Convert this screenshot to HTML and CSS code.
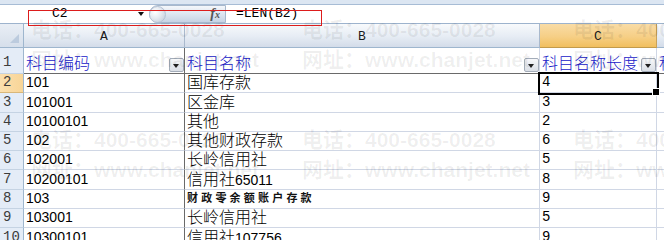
FILE: index.html
```html
<!DOCTYPE html>
<html lang="zh-CN">
<head>
  <meta charset="UTF-8" />
  <title>科目名称长度</title>
  <link rel="stylesheet" href="styles.css">
</head>
<body>
  <div class="app">
    <div class="ribbon-edge"></div>

    <div class="formula-bar">
      <div class="name-box">
        <span class="cell-ref">C2</span>
        <span class="drop-arrow"></span>
      </div>
      <div class="fx-pill">
        <span class="knob"></span>
        <span class="fx">f<small>x</small></span>
      </div>
      <div class="formula">=LEN(B2)</div>
    </div>

    <div class="sheet">
      <div class="corner"><span class="tri"></span></div>
      <div class="col-hd">A</div>
      <div class="col-hd">B</div>
      <div class="col-hd active">C</div>
      <div class="col-hd last"></div>

      <div class="row-hd first">1</div>
      <div class="cell head col-a"><span>科目编码</span><span class="filter"></span></div>
      <div class="cell head"><span>科目名称</span><span class="filter"></span></div>
      <div class="cell head"><span>科目名称长度</span><span class="filter"></span></div>
      <div class="cell head last"><span>科</span></div>

      <div class="row-hd active">2</div>
      <div class="cell col-a">101</div>
      <div class="cell zh">国库存款</div>
      <div class="cell num sel">4</div>
      <div class="cell last"></div>

      <div class="row-hd">3</div>
      <div class="cell col-a">101001</div>
      <div class="cell zh">区金库</div>
      <div class="cell num">3</div>
      <div class="cell last"></div>

      <div class="row-hd">4</div>
      <div class="cell col-a">10100101</div>
      <div class="cell zh">其他</div>
      <div class="cell num">2</div>
      <div class="cell last"></div>

      <div class="row-hd">5</div>
      <div class="cell col-a">102</div>
      <div class="cell zh">其他财政存款</div>
      <div class="cell num">6</div>
      <div class="cell last"></div>

      <div class="row-hd">6</div>
      <div class="cell col-a">102001</div>
      <div class="cell zh">长岭信用社</div>
      <div class="cell num">5</div>
      <div class="cell last"></div>

      <div class="row-hd">7</div>
      <div class="cell col-a">10200101</div>
      <div class="cell zh">信用社<span class="digits">65011</span></div>
      <div class="cell num">8</div>
      <div class="cell last"></div>

      <div class="row-hd">8</div>
      <div class="cell col-a">103</div>
      <div class="cell"><span class="brush">财政零余额账户存款</span></div>
      <div class="cell num">9</div>
      <div class="cell last"></div>

      <div class="row-hd">9</div>
      <div class="cell col-a">103001</div>
      <div class="cell zh">长岭信用社</div>
      <div class="cell num">5</div>
      <div class="cell last"></div>

      <div class="row-hd">10</div>
      <div class="cell col-a">10300101</div>
      <div class="cell zh">信用社<span class="digits">107756</span></div>
      <div class="cell num">9</div>
      <div class="cell last"></div>
    </div>

    <!-- 水印 -->
    <div class="watermark">
      <div class="wm-block">
        <div class="wm-line"><span>电话：400-665-0028</span><span>电话：400-665-0028</span><span>电话：400-665-0028</span></div>
        <div class="wm-line"><span>网址：www.chanjet.net</span><span>网址：www.chanjet.net</span><span>网址：www.chanjet.net</span></div>
      </div>
      <div class="wm-block">
        <div class="wm-line"><span>电话：400-665-0028</span><span>电话：400-665-0028</span><span>电话：400-665-0028</span></div>
        <div class="wm-line"><span>网址：www.chanjet.net</span><span>网址：www.chanjet.net</span><span>网址：www.chanjet.net</span></div>
      </div>
    </div>

    <div class="mark"></div>
  </div>
</body>
</html>
```

FILE: styles.css
```css
:root {
  --grid: #d0d7e5;
  --hd-border: #9eb6ce;
  --dark: #6a6a6a;
  --title: #2020c8;
}
* { box-sizing: border-box; }
body {
  margin: 0;
  background: #fff;
  font-family: 'Liberation Sans', 'Noto Sans CJK SC', sans-serif;
  color: #000;
}
.app {
  position: relative;
  width: 664px;
  height: 240px;
  overflow: hidden;
}
.ribbon-edge {
  height: 5px;
  background: #dce6f2;
  border-bottom: 1px solid #a7bcd5;
}

/* formula bar */
.formula-bar {
  display: flex;
  height: 19px;
  border-bottom: 1px solid #9db3cd;
  background: #fff;
}
.name-box {
  width: 149px;
  display: flex;
  align-items: center;
  padding-left: 52px;
  font: 13px/18px 'Liberation Mono', monospace;
}
.drop-arrow {
  margin-left: auto;
  margin-right: 5px;
  border-top: 4px solid #111;
  border-left: 3.5px solid transparent;
  border-right: 3.5px solid transparent;
}
.fx-pill {
  width: 77px;
  display: flex;
  align-items: center;
  justify-content: space-between;
  border: 1px solid #a8b8cc;
  border-radius: 9px 0 0 9px;
  background: linear-gradient(#f4f7fb, #dbe4ef 55%, #c6d3e4);
}
.knob {
  width: 17px;
  height: 17px;
  margin-left: -1px;
  border-radius: 50%;
  border: 1px solid #b4c2d4;
  background: radial-gradient(circle at 35% 35%, #ffffff, #e4e9f0 45%, #bcc8d8);
}
.fx {
  margin-right: 5px;
  font: italic bold 14px/16px 'Liberation Serif', serif;
  color: #555;
}
.fx small { font-size: 10px; }
.formula {
  padding-left: 10px;
  font: 13px/18px 'Liberation Mono', monospace;
}

/* sheet grid */
.sheet {
  display: grid;
  grid-template-columns: 24px 161px 355px 117px 1fr;
  grid-template-rows: 24px 26px repeat(9, 19.3px);
}
.corner {
  position: relative;
  background: linear-gradient(#e9eef5, #d6dfeb);
  border-right: 1px solid var(--hd-border);
  border-bottom: 1px solid var(--hd-border);
}
.corner .tri {
  position: absolute;
  right: 4px;
  bottom: 4px;
  border-left: 9px solid transparent;
  border-bottom: 9px solid #bccbde;
}
.col-hd {
  display: flex;
  justify-content: center;
  padding-top: 5px;
  font: 13px/16px 'Liberation Mono', monospace;
  color: #1b1b1b;
  background: linear-gradient(#f8fafc, #e6ecf4 55%, #d3dce9);
  border-right: 1px solid #a9b9cd;
  border-bottom: 1px solid var(--hd-border);
}
.col-hd.active {
  background: linear-gradient(#f9dca6, #f6cf86 55%, #f1bf5e);
  border-right-color: #c9a35a;
  border-bottom-color: #c29b4c;
}
.col-hd.last { border-right: none; }
.row-hd {
  display: flex;
  align-items: flex-end;
  padding: 0 0 1px 3px;
  font: 14px/17px 'Liberation Mono', monospace;
  color: #3c3c3c;
  background: #e4ecf7;
  border-right: 1px solid var(--hd-border);
  border-bottom: 1px solid #c5d3e3;
}
.row-hd.first { padding-bottom: 2px; }
.row-hd.active {
  background: linear-gradient(90deg, #fbdfae, #f8d597);
  border-bottom-color: #d8b77a;
}
.cell {
  display: flex;
  align-items: flex-end;
  padding: 0 0 1px 2px;
  font-size: 14px;
  line-height: 17px;
  white-space: nowrap;
  overflow: hidden;
  border-right: 1px solid var(--grid);
  border-bottom: 1px solid var(--grid);
}
.cell.col-a { border-right-color: var(--dark); }
.cell.last { border-right: none; }
.cell.zh { font-size: 16px; font-weight: 300; line-height: 18px; padding-bottom: 0; }
.cell.num { font-family: 'Liberation Mono', monospace; }
.digits { font-size: 14px; font-weight: 400; }
.brush {
  font-size: 11px;
  font-weight: bold;
  letter-spacing: 3.2px;
  line-height: 15px;
  padding-bottom: 1px;
  color: #111;
}
.cell.head {
  justify-content: space-between;
  padding-bottom: 0;
  font-size: 16px;
  font-weight: 300;
  line-height: 19px;
  color: var(--title);
  border-bottom-color: var(--dark);
}
.filter {
  position: relative;
  flex: none;
  width: 15px;
  height: 14px;
  margin-bottom: 1px;
  border: 1px solid #a3acb9;
  border-radius: 2px;
  background: linear-gradient(#f7f8fa, #dadfe6);
}
.filter::after {
  content: '';
  position: absolute;
  left: 3px;
  top: 5px;
  border-top: 4px solid #222;
  border-left: 3.5px solid transparent;
  border-right: 3.5px solid transparent;
}
.cell.sel {
  position: relative;
  z-index: 1;
  overflow: visible;
  outline: 2px solid #000;
}
.cell.sel::after {
  content: '';
  position: absolute;
  right: -4px;
  bottom: -4px;
  width: 6px;
  height: 6px;
  background: #000;
  border: 1px solid #fff;
}

/* watermark over the sheet */
.watermark {
  position: absolute;
  top: 19px;
  left: 31px;
  display: flex;
  flex-direction: column;
  gap: 59px;
  pointer-events: none;
  font-size: 21px;
  font-weight: bold;
  line-height: 21px;
  color: rgba(0, 0, 0, 0.065);
}
.wm-block {
  display: flex;
  flex-direction: column;
  gap: 9px;
}
.wm-line { display: flex; }
.wm-line span {
  flex: none;
  width: 271px;
  white-space: nowrap;
}

/* red annotation box */
.mark {
  position: absolute;
  left: 28px;
  top: 10px;
  width: 294px;
  height: 16px;
  border: 1px solid #dd1c1c;
}
```
